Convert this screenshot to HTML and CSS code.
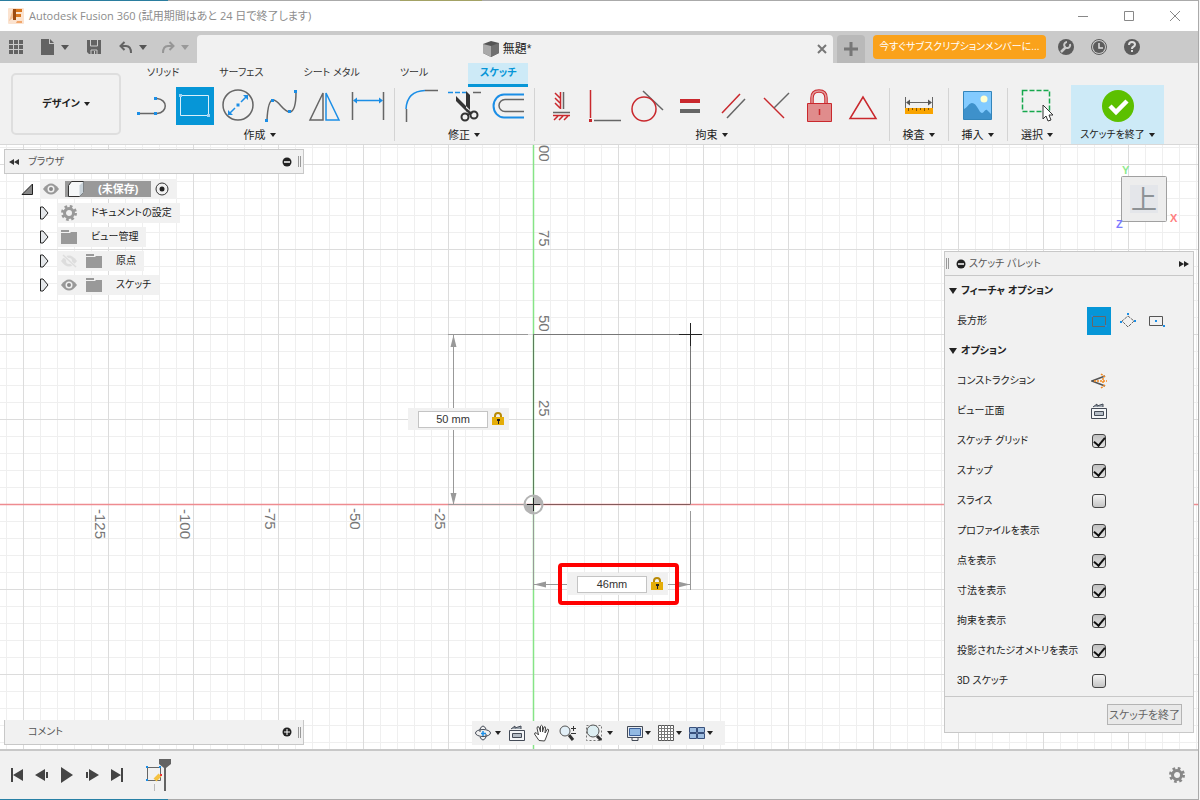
FILE: index.html
```
<!DOCTYPE html>
<html lang="ja">
<head>
    <meta charset="UTF-8">
    <meta name="viewport" content="width=device-width, initial-scale=1.0">
    <title>Autodesk Fusion 360</title>
    <link rel="stylesheet" href="styles.css">
</head>
<body>
    <div class="app">
        <div class="edge edge-top"></div>

        <header class="titlebar">
            <svg class="logo" width="16" height="16" viewBox="0 0 16 16">
                <rect width="16" height="16" rx="1" fill="#fbe3d0"/>
                <path d="M1 13 5 1v9z" fill="#f5bd92"/>
                <path d="M5 1h9v3H8v2h5v3H8v3H5z" fill="#d9751d"/>
                <path d="M5 1h3v11H5z" fill="#9b4a12"/>
                <path d="M9 13h5v2H8z" fill="#f1a66b"/>
            </svg>
            <h1>Autodesk Fusion 360 (試用期間はあと 24 日で終了します)</h1>
            <div class="window-buttons">
                <button aria-label="最小化"><svg width="12" height="12"><path d="M1 6.500h10" stroke="#888"/></svg></button>
                <button aria-label="最大化"><svg width="12" height="12"><path d="M1.500 1.500h9v9h-9z" fill="none" stroke="#888"/></svg></button>
                <button aria-label="閉じる"><svg width="12" height="12"><path d="M1 1l10 10M11 1 1 11" stroke="#888"/></svg></button>
            </div>
        </header>

        <div class="quickbar">
            <div class="quick-tools">
                <button aria-label="データ パネル"><svg width="14" height="14" fill="#636363"><path d="M0 0h4v4H0zM5 0h4v4H5zM10 0h4v4h-4zM0 5h4v4H0zM5 5h4v4H5zM10 5h4v4h-4zM0 10h4v4H0zM5 10h4v4H5zM10 10h4v4h-4z"/></svg></button>
                <button class="quick-file" aria-label="ファイル"><svg width="14" height="16" fill="#636363"><path d="M0 0h8v5h5v11H0zM9 0l4 4H9z"/></svg><span class="caret"></span></button>
                <button class="quick-save" aria-label="保存"><svg width="14" height="14"><path d="M0 0h14v14H2l-2-2z" fill="#636363"/><path d="M3.500 0v6h7V0M4 14v-4h6v4" fill="none" stroke="#ccc"/><path d="M7 11h1v3H7z" fill="#ccc"/></svg></button>
                <button class="quick-undo" aria-label="元に戻す"><svg width="14" height="13"><path d="M1 5h6q5 0 5 7M5.500 1 1.500 5l4 4" fill="none" stroke="#636363" stroke-width="2"/></svg><span class="caret"></span></button>
                <button class="quick-redo" aria-label="やり直し"><svg width="14" height="13"><path d="M13 5H7q-5 0-5 7M8.500 1l4 4-4 4" fill="none" stroke="#969696" stroke-width="2"/></svg><span class="caret"></span></button>
            </div>
            <div class="doc-tab">
                <span class="doc-name">
                    <svg width="16" height="16"><path d="M0 3 8 0l8 2v10l-8 4-8-4z" fill="#555"/><path d="M0 3l8 2v11l-8-4z" fill="#aaa"/><path d="M8 5l8-3v10l-8 4z" fill="#707070"/></svg>
                    無題*
                </span>
                <button aria-label="タブを閉じる"><svg width="10" height="10"><path d="M1 1l8 8M9 1 1 9" stroke="#777" stroke-width="2"/></svg></button>
            </div>
            <button class="add-tab" aria-label="新規"><svg width="14" height="14"><path d="M7 0v14M0 7h14" stroke="#777" stroke-width="3"/></svg></button>
            <button class="subscribe">今すぐサブスクリプションメンバーに...</button>
            <div class="help-buttons">
                <button aria-label="拡張機能"><svg width="16" height="16"><circle cx="8" cy="8" r="8" fill="#5c5c5c"/><path d="M3 13l5-5" stroke="#ccc" stroke-width="2.500"/><path d="M12 5a3 3 0 1 1-3-2" fill="none" stroke="#ccc" stroke-width="2"/></svg></button>
                <button aria-label="ジョブ状態"><svg width="16" height="16"><circle cx="8" cy="8" r="7.500" fill="none" stroke="#5c5c5c"/><circle cx="8" cy="8" r="6" fill="#5c5c5c"/><path d="M8 4v5h4" fill="none" stroke="#ddd" stroke-width="1.500"/></svg></button>
                <button aria-label="ヘルプ"><svg width="16" height="16"><circle cx="8" cy="8" r="8" fill="#5c5c5c"/><path d="M5 6q0-3 3-3t3 2.500q0 1.500-2 2.500-1 .5-1 2" fill="none" stroke="#ddd" stroke-width="2"/><path d="M7 11h2v2H7z" fill="#ddd"/></svg></button>
            </div>
        </div>

        <div class="ribbon">
            <button class="workspace">デザイン <span class="caret"></span></button>
            <div class="ribbon-main">
                <nav class="ribbon-tabs">
                    <a href="#">ソリッド</a>
                    <a href="#">サーフェス</a>
                    <a href="#">シート メタル</a>
                    <a href="#">ツール</a>
                    <a href="#" class="active">スケッチ</a>
                </nav>
                <div class="groups">
                    <section class="group">
                        <div class="tools">
                            <button aria-label="線分"><svg width="38" height="38"><g fill="none" stroke="#666" stroke-width="1.500"><path d="M7 26.500h14M24 11.500c11 1 11 14 0 15"/></g><path d="M4 25h3v3H4zM24 25h-3v3h3zM21 10h3v3h-3z" fill="#1b8ee6"/></svg></button>
                            <button class="selected" aria-label="長方形"><svg width="38" height="38"><path d="M4.500 8.500h28v20h-28z" fill="none" stroke="#d9effa"/><path d="M3 7h3v3H3zM31 27h3v3h-3z" fill="#9fd4f5"/></svg></button>
                            <button aria-label="円"><svg width="38" height="38"><circle cx="19" cy="18" r="15" fill="none" stroke="#666" stroke-width="1.500"/><path d="M11 26l5-5M22 15l5-5" stroke="#1b8ee6" stroke-width="1.500"/><path d="M9 28v-5l5 5zM29 8v5l-5-5zM17.500 16.500h3v3h-3z" fill="#1b8ee6"/></svg></button>
                            <button aria-label="スプライン"><svg width="38" height="38"><path d="M5 33q1-20 6-20c6 0 10 12 17 12q6-1 6-20" fill="none" stroke="#666" stroke-width="1.500"/><path d="M3 32h3v3H3zM9 12h3v3H9zM26 23h3v3h-3zM32 3h3v3h-3z" fill="#1b8ee6"/></svg></button>
                            <button aria-label="ミラー"><svg width="38" height="38" fill="none" stroke-width="1.500"><path d="M18 6v27H5z" stroke="#666"/><path d="M21 6v27h13z" stroke="#1b8ee6"/></svg></button>
                            <button aria-label="寸法"><svg width="38" height="38"><path d="M4.500 5v28M35.500 5v28" stroke="#666" stroke-width="1.500"/><path d="M7 13.500h26" stroke="#1b8ee6" stroke-width="1.500"/><path d="M5 13.500l4-3v6zM35 13.500l-4-3v6z" fill="#1b8ee6"/></svg></button>
                        </div>
                        <button class="group-label">作成<span class="caret"></span></button>
                    </section>
                    <section class="group">
                        <div class="tools">
                            <button aria-label="フィレット"><svg width="38" height="38" fill="none" stroke-width="1.500"><path d="M4 22Q5 4 23 3.500" stroke="#1b8ee6"/><path d="M23 3.500h13M4.500 22v13" stroke="#666"/></svg></button>
                            <button aria-label="トリム"><svg width="38" height="38"><path d="M3 5.500h18" stroke="#1b8ee6" stroke-width="1.500" stroke-dasharray="5 2"/><path d="M28 5.500h8" stroke="#666" stroke-width="1.500"/><path d="M11 9v5l11 11 3-2zM21 4l4 4v16l-4-3z" fill="#333"/><g fill="none" stroke="#333" stroke-width="2"><circle cx="20" cy="30" r="3.500"/><circle cx="29" cy="28" r="3.500"/><path d="M22 24l4 2-4 2"/></g></svg></button>
                            <button aria-label="オフセット"><svg width="38" height="38" fill="none" stroke-width="1.500"><path d="M36 7.500H16a10 11 0 0 0 0 23h20" stroke="#1b8ee6" stroke-width="2"/><path d="M36 12.500H17a6 6 0 0 0 0 12h19" stroke="#666"/></svg></button>
                        </div>
                        <button class="group-label">修正<span class="caret"></span></button>
                    </section>
                    <section class="group">
                        <div class="tools">
                            <button aria-label="水平/垂直"><svg width="38" height="38" fill="none" stroke="#c9282d" stroke-width="1.500"><path d="M18.500 5v17M13 6l5 5M13 11l5 5M13 16l5 5M11 28.500h17M16 29l-4 4M21 29l-4 4M26 29l-4 4"/><path d="M21.500 5v17M11 25.500h17" stroke="#666"/></svg></button>
                            <button aria-label="一致"><svg width="38" height="38"><path d="M5.500 3v28" stroke="#c9282d" stroke-width="1.500"/><path d="M4 32h3v3H4z" fill="#c9282d"/><path d="M9 33.500h27" stroke="#666" stroke-width="1.500"/></svg></button>
                            <button aria-label="接線"><svg width="38" height="38" fill="none" stroke-width="1.500"><path d="M15 4l20 19" stroke="#666"/><circle cx="16" cy="22" r="12" stroke="#c9282d"/></svg></button>
                            <button aria-label="等しい"><svg width="38" height="38"><path d="M9 12h20v4H9z" fill="#c9282d"/><path d="M9 22h20v4H9z" fill="#666"/></svg></button>
                            <button aria-label="平行"><svg width="38" height="38" stroke-width="1.500"><path d="M8 26 26 7" stroke="#c9282d"/><path d="M13 31l18-19" stroke="#666"/></svg></button>
                            <button aria-label="直交"><svg width="38" height="38" stroke-width="1.500"><path d="M7 11l20 20" stroke="#c9282d"/><path d="M17 21 32 6" stroke="#666"/></svg></button>
                            <button aria-label="固定"><svg width="38" height="38"><path d="M12 17v-6q0-7 7-7t7 7v6" fill="none" stroke="#c9282d" stroke-width="3.500"/><path d="M12 17v-6q0-7 7-7t7 7v6" fill="none" stroke="#e39b9b" stroke-width="1.500"/><path d="M7.500 16.500h24v18h-24z" fill="#e08c8c" stroke="#c9282d"/><path d="M19.500 22v6" stroke="#c9282d" stroke-width="1.500"/></svg></button>
                            <button aria-label="中点"><svg width="38" height="38"><path d="M20 10 7 31.500h26z" fill="none" stroke="#c9282d" stroke-width="1.500"/></svg></button>
                        </div>
                        <button class="group-label">拘束<span class="caret"></span></button>
                    </section>
                    <section class="group single">
                        <div class="tools">
                            <button aria-label="計測"><svg width="38" height="38"><path d="M5.500 10v11M32.500 10v11M7 15.500h24" stroke="#666"/><path d="M6 15.500l4-3v6zM32 15.500l-4-3v6z" fill="#555"/><path d="M5 21h28v6H5z" fill="#f9a400"/><path d="M8.500 21v3M12.500 21v2M16.500 21v3M20.500 21v2M24.500 21v3M28.500 21v2" stroke="#855500"/></svg></button>
                        </div>
                        <button class="group-label">検査<span class="caret"></span></button>
                    </section>
                    <section class="group single">
                        <div class="tools">
                            <button aria-label="画像"><svg width="38" height="38"><path d="M4.500 4.500h28v28h-28z" fill="#83cbff" stroke="#3385bb"/><path d="M5 22c4-2 5-6 8-6 5 0 7 10 10 10 2 0 3-4 5-3l4 4v5H5z" fill="#3e91cb"/><circle cx="25" cy="12" r="3.500" fill="#ffffd0"/></svg></button>
                        </div>
                        <button class="group-label">挿入<span class="caret"></span></button>
                    </section>
                    <section class="group single last">
                        <div class="tools">
                            <button aria-label="選択"><svg width="38" height="38"><path d="M4.500 3.500h27v21h-27z" fill="none" stroke="#16a84d" stroke-width="1.500" stroke-dasharray="5 2"/><path d="M25 18v14l3-3 2 5 3-1-2-5h4z" fill="#fff" stroke="#333"/></svg></button>
                        </div>
                        <button class="group-label">選択<span class="caret"></span></button>
                    </section>
                    <section class="group finish">
                        <div class="tools">
                            <button aria-label="スケッチを終了"><svg width="38" height="38"><circle cx="19" cy="19" r="16" fill="#5cc000"/><path d="M11 19l6 6 11-11" fill="none" stroke="#fff" stroke-width="4.500"/></svg></button>
                        </div>
                        <button class="group-label">スケッチを終了<span class="caret"></span></button>
                    </section>
                </div>
            </div>
        </div>

        <main class="canvas">
            <svg class="sketch" width="100%" height="100%">
                <path d="M533.500 0v604" stroke="#86e486" stroke-width="1.500"/>
                <line x1="0" y1="359.500" x2="100%" y2="359.500" stroke="#ee8b90" stroke-width="1.500"/>
                <g fill="none" stroke="#999">
                    <path d="M448 189.500h80M448 359.500h86M533.500 360v85M690.500 366v79"/>
                    <path d="M453.500 190v170M534 439.500h157"/>
                </g>
                <path d="M533.500 190v169" stroke="#5b7c5b"/>
                <path d="M533 359.500h157" stroke="#835a5a"/>
                <path d="M533 189.500h157.500v170" fill="none" stroke="#777"/>
                <path d="M679 189.500h23M690.500 178v23" stroke="#222"/>
                <path d="M453.500 190l-3 12h6zM453.500 360l-3-12h6zM534 439.500l12-3v6zM690 439.500l-12-3v6z" fill="#999"/>
                <g>
                    <circle cx="533.500" cy="359.500" r="9" fill="none" stroke="#b4b4b4" stroke-width="2"/>
                    <path d="M533.500 359.500v-9a9 9 0 0 1 9 9zM533.500 359.500v9a9 9 0 0 1-9-9z" fill="#b4b4b4"/>
                    <path d="M527 359.500h13M533.500 353v13" stroke="#222"/>
                </g>
                <g class="ruler">
                    <text transform="translate(539 0) rotate(90)">00</text>
                    <text transform="translate(539 85) rotate(90)">75</text>
                    <text transform="translate(539 170) rotate(90)">50</text>
                    <text transform="translate(539 255) rotate(90)">25</text>
                    <text transform="translate(95 364) rotate(90)">-125</text>
                    <text transform="translate(180 364) rotate(90)">-100</text>
                    <text transform="translate(265 363) rotate(90)">-75</text>
                    <text transform="translate(350 363) rotate(90)">-50</text>
                    <text transform="translate(435 363) rotate(90)">-25</text>
                </g>
            </svg>

            <div class="dimension height-dim">
                <input type="text" value="50 mm" aria-label="高さ">
                <svg width="12" height="14"><path d="M3 6V4q0-3 3-3t3 3v2" fill="none" stroke="#b98a05" stroke-width="2"/><path d="M0 5h12v8H0z" fill="#e4ad08"/><path d="M5 7h3v2H7v3H6V9H5z" fill="#222"/></svg>
            </div>
            <div class="dimension width-dim">
                <input type="text" value="46mm" aria-label="幅">
                <svg width="12" height="14"><path d="M3 6V4q0-3 3-3t3 3v2" fill="none" stroke="#b98a05" stroke-width="2"/><path d="M0 5h12v8H0z" fill="#e4ad08"/><path d="M5 7h3v2H7v3H6V9H5z" fill="#222"/></svg>
            </div>
            <div class="callout"></div>

            <aside class="browser">
                <div class="panel-bar">
                    <svg width="10" height="8"><path d="M5 1v6L0 4zM10 1v6L5 4z" fill="#333"/></svg>
                    <span class="panel-title">ブラウザ</span>
                    <button aria-label="折りたたむ"><svg width="10" height="10"><circle cx="5" cy="5" r="4.500" fill="#222"/><path d="M2 5h6" stroke="#fff" stroke-width="1.500"/></svg></button>
                    <span class="grip"></span>
                </div>
                <ul class="tree">
                    <li class="root">
                        <svg class="toggle" width="12" height="12"><path d="M11.500 1v10.500H1z" fill="#888" stroke="#222"/></svg>
                        <div class="node">
                            <svg width="16" height="12"><path d="M0 6q8-11 16 0-8 11-16 0z" fill="#999"/><circle cx="8" cy="6" r="3.500" fill="#f0f0f0"/><circle cx="8" cy="6" r="2" fill="#888"/></svg>
                            <span class="root-name"><svg width="16" height="16"><path d="M.5 4.500l3-4h12v11l-4 4H.5z" fill="#f5f7f8" stroke="#333"/><path d="M11.500 4.500l4-4v11l-4 4z" fill="#c9d3da"/></svg>(未保存)</span>
                            <svg width="14" height="14"><circle cx="7" cy="7" r="6" fill="none" stroke="#333"/><circle cx="7" cy="7" r="2.500" fill="#222"/></svg>
                        </div>
                    </li>
                    <li>
                        <svg class="toggle" width="12" height="14"><path d="M1.500 1v12H4l5-6-5-6z" fill="#e4e7ea" stroke="#222"/></svg>
                        <div class="node">
                            <svg width="16" height="16"><circle cx="8" cy="8" r="6.500" fill="none" stroke="#999" stroke-width="3" stroke-dasharray="2.600 2.500"/><circle cx="8" cy="8" r="4.500" fill="none" stroke="#999" stroke-width="3"/></svg>
                            <span>ドキュメントの設定</span>
                        </div>
                    </li>
                    <li>
                        <svg class="toggle" width="12" height="14"><path d="M1.500 1v12H4l5-6-5-6z" fill="#e4e7ea" stroke="#222"/></svg>
                        <div class="node">
                            <svg width="16" height="14"><path d="M0 0h8v2H0zM0 3h9l1-1h6v12H0z" fill="#999"/></svg>
                            <span>ビュー管理</span>
                        </div>
                    </li>
                    <li>
                        <svg class="toggle" width="12" height="14"><path d="M1.500 1v12H4l5-6-5-6z" fill="#e4e7ea" stroke="#222"/></svg>
                        <div class="node">
                            <svg width="16" height="14"><path d="M0 7q8-11 16 0-8 11-16 0z" fill="#ddd"/><circle cx="8" cy="7" r="3" fill="#f0f0f0"/><path d="M2 1l13 12" stroke="#f0f0f0" stroke-width="3"/><path d="M2 1l13 12" stroke="#ddd" stroke-width="1.500"/></svg>
                            <svg width="16" height="14"><path d="M0 0h8v2H0zM0 3h9l1-1h6v12H0z" fill="#999"/></svg>
                            <span>原点</span>
                        </div>
                    </li>
                    <li>
                        <svg class="toggle" width="12" height="14"><path d="M1.500 1v12H4l5-6-5-6z" fill="#e4e7ea" stroke="#222"/></svg>
                        <div class="node">
                            <svg width="16" height="12"><path d="M0 6q8-11 16 0-8 11-16 0z" fill="#999"/><circle cx="8" cy="6" r="3.500" fill="#f0f0f0"/><circle cx="8" cy="6" r="2" fill="#888"/></svg>
                            <svg width="16" height="14"><path d="M0 0h8v2H0zM0 3h9l1-1h6v12H0z" fill="#999"/></svg>
                            <span>スケッチ</span>
                        </div>
                    </li>
                </ul>
            </aside>

            <svg class="viewcube" width="64" height="70">
                <rect x="7.500" y="13.500" width="45" height="45" rx="1" fill="#ededed" stroke="#a0a0a0"/>
                <path d="M16 22h28v28H16z" fill="#e4e6ea"/>
                <text class="face" x="30" y="46">上</text>
                <text class="axis-y" x="8" y="11">Y</text>
                <text class="axis-x" x="56" y="59">X</text>
                <text class="axis-z" x="2" y="65">Z</text>
            </svg>

            <aside class="palette">
                <div class="palette-head">
                    <span class="grip"></span>
                    <svg width="10" height="10"><circle cx="5" cy="5" r="4.500" fill="#222"/><path d="M2 5h6" stroke="#fff" stroke-width="1.500"/></svg>
                    <span class="panel-title">スケッチ パレット</span>
                    <svg width="10" height="8"><path d="M0 1v6l5-3zM5 1v6l5-3z" fill="#222"/></svg>
                </div>
                <div class="palette-body">
                    <h2>フィーチャ オプション</h2>
                    <div class="option shapes">
                        <span>長方形</span>
                        <button class="on" aria-label="2 点指定の長方形"><svg width="16" height="16"><path d="M1.500 3.500h13v10h-13z" fill="none" stroke="#666"/><path d="M0 2h2v2H0zM14 12h2v2h-2z" fill="#1b8ee6"/></svg></button>
                        <button aria-label="3 点指定の長方形"><svg width="16" height="16"><path d="M8 3l6 5-6 6-6-6z" fill="none" stroke="#666" stroke-dasharray="3 1"/><path d="M7 0h2v2H7zM0 8h2v2H0zM14 7h2v2h-2z" fill="#1b8ee6"/></svg></button>
                        <button aria-label="中心の長方形"><svg width="16" height="16"><path d="M.500 3.500h13v9H.500z" fill="none" stroke="#555"/><path d="M6 7h2v2H6zM14 12h2v2h-2z" fill="#1b8ee6"/></svg></button>
                    </div>
                    <h2>オプション</h2>
                    <div class="option">
                        <span>コンストラクション</span>
                        <button aria-label="コンストラクション"><svg width="16" height="16"><path d="M14 3 1 8l13 5" fill="none" stroke="#555" stroke-width="1.500"/><path d="M3 8h13M10 1l4 3M10 15l4-3M12 5v6" fill="none" stroke="#f58b1f" stroke-width="1.500" stroke-dasharray="2 1"/></svg></button>
                    </div>
                    <div class="option">
                        <span>ビュー正面</span>
                        <button aria-label="ビュー正面"><svg width="16" height="16"><path d="M.500 5.500h15v10H.500z" fill="#f4f6f8" stroke="#444b57"/><path d="M3.500 8.500h9v4h-9z" fill="#b5bdc6" stroke="#444b57"/><path d="M2 4l4-3v2l6-2v3" fill="#9aa3ad" stroke="#444b57"/></svg></button>
                    </div>
                    <label class="option"><span>スケッチ グリッド</span><input type="checkbox" checked></label>
                    <label class="option"><span>スナップ</span><input type="checkbox" checked></label>
                    <label class="option"><span>スライス</span><input type="checkbox"></label>
                    <label class="option"><span>プロファイルを表示</span><input type="checkbox" checked></label>
                    <label class="option"><span>点を表示</span><input type="checkbox" checked></label>
                    <label class="option"><span>寸法を表示</span><input type="checkbox" checked></label>
                    <label class="option"><span>拘束を表示</span><input type="checkbox" checked></label>
                    <label class="option"><span>投影されたジオメトリを表示</span><input type="checkbox" checked></label>
                    <label class="option"><span>3D スケッチ</span><input type="checkbox"></label>
                </div>
                <div class="palette-foot"><button>スケッチを終了</button></div>
            </aside>

            <div class="panel-bar comments">
                <span class="panel-title">コメント</span>
                <button aria-label="コメントを追加"><svg width="10" height="10"><circle cx="5" cy="5" r="4.500" fill="#222"/><path d="M2 5h6M5 2v6" stroke="#fff"/></svg></button>
                <span class="grip"></span>
            </div>

            <div class="navbar">
                <button aria-label="オービット"><svg width="16" height="16" fill="none" stroke="#444b57"><ellipse cx="8" cy="8" rx="7.500" ry="3.500"/><path d="M5 4q3-6 6 0M5 12q3 6 6 0M5 4v3M11 9v3"/><path d="M8 6v5M6 8.500h5" stroke="#1b8ee6" stroke-width="1.500"/></svg><span class="caret"></span></button>
                <button aria-label="ビュー正面"><svg width="16" height="16"><path d="M.500 5.500h15v10H.500z" fill="#f4f6f8" stroke="#444b57"/><path d="M3.500 8.500h9v4h-9z" fill="#b5bdc6" stroke="#444b57"/><path d="M2 4l4-3v2l6-2v3" fill="#9aa3ad" stroke="#444b57"/></svg></button>
                <button aria-label="画面移動"><svg width="18" height="18"><path d="M6 16.500 1.500 10q0-2 2-1l2 2L4 4q0-2 2-1l1.500 5L7.500 2q1-1.500 2 0v6l1.500-5q1.500-1 1.500 1L12 9l2.500-4q1.500 0 1 2l-3 8-1 2z" fill="#fff" stroke="#444"/></svg></button>
                <button aria-label="ズーム"><svg width="18" height="16"><circle cx="6" cy="6" r="5" fill="#e3f0f8" stroke="#555"/><path d="M10 10l4 5" stroke="#333" stroke-width="3"/><path d="M12 3.500h5M14.500 1v5M12 8.500h5" stroke="#333"/></svg></button>
                <button aria-label="フィット"><svg width="18" height="18"><path d="M1.500 1.500h15v15h-15z" fill="none" stroke="#777" stroke-dasharray="2 2"/><circle cx="8" cy="7" r="6" fill="#ddeef2" stroke="#555"/><path d="M12 12l4 4" stroke="#333" stroke-width="3"/></svg><span class="caret"></span></button>
                <button class="nav-display" aria-label="表示設定"><svg width="16" height="16"><path d="M.500 1.500h15v11H.500z" fill="#e7ecf1" stroke="#444b57"/><path d="M2.500 3.500h11v7h-11z" fill="#92b9e2" stroke="#3a5f9a"/><path d="M5 13v2.500h6V13" fill="none" stroke="#444b57"/></svg><span class="caret"></span></button>
                <button aria-label="グリッドとスナップ"><svg width="16" height="16"><path d="M.500.500h15v15H.500z" fill="#fff" stroke="#555"/><path d="M3.500 0v16M6.500 0v16M9.500 0v16M12.500 0v16M0 3.500h16M0 6.500h16M0 9.500h16M0 12.500h16" stroke="#777"/></svg><span class="caret"></span></button>
                <button aria-label="ビューポート"><svg width="16" height="14" fill="#9ebde0" stroke="#38507c"><path d="M.500 1.500h7v5h-7zM8.500 1.500h7v5h-7zM.500 7.500h7v5h-7zM8.500 7.500h7v5h-7z"/></svg><span class="caret"></span></button>
            </div>
        </main>

        <footer class="timeline">
            <div class="playback">
                <button aria-label="先頭へ"><svg width="14" height="16" fill="#444"><path d="M1 1h2v14H1zM13 2v12L3 8z"/></svg></button>
                <button aria-label="戻る"><svg width="14" height="16" fill="#444"><path d="M10 2v12L0 8zM11 5h2v6h-2z"/></svg></button>
                <button aria-label="再生"><svg width="14" height="16" fill="#444"><path d="M1 0l12 8-12 8z"/></svg></button>
                <button aria-label="進む"><svg width="14" height="16" fill="#444"><path d="M4 2v12l10-6zM1 5h2v6H1z"/></svg></button>
                <button aria-label="末尾へ"><svg width="14" height="16" fill="#444"><path d="M11 1h2v14h-2zM1 2v12l10-6z"/></svg></button>
            </div>
            <svg class="feature" width="28" height="34">
                <path d="M2.500 9.500h13v13h-13z" fill="none" stroke="#666"/>
                <path d="M1 8h2v2H1zM14 8h2v2h-2zM1 21h2v2H1z" fill="#1b8ee6"/>
                <path d="M10 22l5-5" stroke="#f5c242" stroke-width="4"/>
                <path d="M15 16h2v2h-2z" fill="#e33"/>
                <path d="M9 26h1v7H9z" fill="#bbb"/>
                <path d="M14 1h12v5l-5 4v23h-2V10l-5-4z" fill="#636363"/>
            </svg>
            <button class="settings" aria-label="設定"><svg width="16" height="16"><circle cx="8" cy="8" r="6.500" fill="none" stroke="#888" stroke-width="3" stroke-dasharray="2.600 2.500"/><circle cx="8" cy="8" r="4.500" fill="none" stroke="#888" stroke-width="3"/></svg></button>
        </footer>
        <div class="edge"></div>
    </div>
</body>
</html>
```
FILE: styles.css
```
* {
    margin: 0;
    padding: 0;
    box-sizing: border-box;
}

body {
    font-family: 'Liberation Sans', 'Noto Sans CJK JP', sans-serif;
    font-size: 10px;
    font-feature-settings: 'palt';
    line-height: 16px;
    color: #222;
    background: #f4f4f4;
}

button {
    display: flex;
    align-items: center;
    justify-content: center;
    border: none;
    background: none;
    color: inherit;
    font: inherit;
    font-feature-settings: inherit;
    cursor: pointer;
    white-space: nowrap;
}

svg {
    display: block;
    flex: none;
}

.app {
    display: flex;
    flex-direction: column;
    height: 100vh;
    min-height: 700px;
    margin-right: 1px;
    border-right: 1px solid #aaa;
}

.caret {
    flex: none;
    width: 0;
    border: 3px solid transparent;
    border-top: 4px solid currentColor;
    border-bottom: none;
    margin-left: 4px;
}

.edge {
    height: 1px;
    background: linear-gradient(to right, #2881a6 168px, #aaa 168px);
}

.edge-top {
    background: linear-gradient(to right, #2a7d9f 168px, #aaa 168px, #aaa 400px, #a3a265 400px, #a3a265 482px, #aaa 482px);
}

/* title bar */
.titlebar {
    display: flex;
    align-items: center;
    height: 30px;
    padding-left: 8px;
    background: #fff;
}

.titlebar h1 {
    flex: 1;
    margin-left: 5px;
    font-family: 'Open Sans', 'Noto Sans CJK JP', sans-serif;
    font-size: 11px;
    font-weight: 400;
    color: #8c8c8c;
}

.window-buttons {
    display: flex;
}

.window-buttons button {
    width: 46px;
    height: 30px;
}

/* quick access and document tabs */
.quickbar {
    display: flex;
    align-items: flex-end;
    height: 32px;
    background: #cacaca;
}

.quick-tools {
    display: flex;
    align-items: center;
    width: 197px;
    height: 32px;
    padding-left: 9px;
    color: #555;
}

.quick-tools .caret {
    border-width: 4px;
    border-top-width: 5px;
    border-bottom: none;
    margin-left: 6px;
}

.quick-file,
.quick-save,
.quick-undo {
    margin-left: 18px;
}

.quick-redo {
    margin-left: 14px;
    color: #999;
}

.doc-tab {
    display: flex;
    flex: 1;
    align-items: center;
    height: 28px;
    padding-right: 6px;
    background: #f1f1f1;
    border-radius: 4px 4px 0 0;
}

.doc-name {
    display: flex;
    flex: 1;
    align-items: center;
    justify-content: center;
    gap: 4px;
    font-size: 12px;
}

.add-tab {
    width: 28px;
    height: 28px;
    margin-left: 4px;
    background: #b9b9b9;
    border-radius: 4px 4px 0 0;
}

.subscribe {
    width: 173px;
    height: 24px;
    margin: 0 0 4px 8px;
    border-radius: 4px;
    background: #faa21b;
    color: #fff;
}

.help-buttons {
    display: flex;
    gap: 17px;
    width: 152px;
    margin-bottom: 8px;
    padding-left: 12px;
}

/* ribbon */
.ribbon {
    display: flex;
    height: 82px;
    background: #f1f1f1;
    border-bottom: 1px solid #d8d8d8;
}

.workspace {
    width: 110px;
    height: 62px;
    margin: 10px 5px 0 11px;
    border: 2px solid #dedede;
    border-radius: 5px;
    font-weight: 700;
}

.ribbon-main {
    flex: 1;
}

.ribbon-tabs {
    display: flex;
    gap: 40px;
    height: 22px;
    padding-left: 21px;
}

.ribbon-tabs a {
    height: 24px;
    padding-top: 2px;
    border-bottom: 3px solid transparent;
    color: #333;
    text-align: center;
    text-decoration: none;
}

.ribbon-tabs .active {
    width: 60px;
    background: #cdeaf7;
    border-color: #0696d7;
    color: #0696d7;
    font-weight: 700;
}

.groups {
    display: flex;
    height: 59px;
}

.group {
    padding: 2px 8px 0 7px;
    border-right: 1px solid transparent;
    border-image: linear-gradient(#f1f1f1 4px, #d4d4d4 4px, #d4d4d4 55px, #f1f1f1 55px) 1;
}

.tools {
    display: flex;
    justify-content: center;
    gap: 5px;
    height: 38px;
}

.tools .selected {
    background: #0696d7;
}

.group-label {
    width: 100%;
    height: 19px;
    font-size: 11px;
}

.single {
    width: 59px;
}

.last {
    border: none;
}

.finish {
    width: 93px;
    margin-left: 4px;
    padding: 2px 0 0;
    border: none;
    background: #cdeaf7;
}

.finish .group-label {
    font-size: 10px;
}

/* drawing area */
.canvas {
    position: relative;
    flex: 1;
    min-height: 0;
    overflow: hidden;
    background-color: #fff;
    background-image:
        linear-gradient(to right, #dcdcdc 1px, transparent 1px),
        linear-gradient(to bottom, #dcdcdc 1px, transparent 1px),
        linear-gradient(to right, #efefef 1px, transparent 1px),
        linear-gradient(to bottom, #efefef 1px, transparent 1px);
    background-size: 85px 85px, 85px 85px, 17px 17px, 17px 17px;
    background-position: 23px 19px, 23px 19px, 6px 2px, 6px 2px;
}

.sketch {
    position: absolute;
    top: 0;
    left: 0;
}

.ruler {
    font-size: 15px;
    fill: #777;
}

.dimension {
    position: absolute;
    display: flex;
    align-items: center;
    gap: 4px;
    width: 101px;
    height: 22px;
    padding-left: 10px;
    background: #f1f1f1;
}

.dimension input {
    width: 70px;
    height: 17px;
    border: 1px solid #c4c4c4;
    background: #fff;
    color: #333;
    font: inherit;
    font-size: 11px;
    text-align: center;
}

.height-dim {
    top: 263px;
    left: 408px;
}

.width-dim {
    top: 428px;
    left: 567px;
}

.callout {
    position: absolute;
    top: 418px;
    left: 558px;
    width: 121px;
    height: 42px;
    border: 4px solid #f00;
    border-radius: 4px;
}

/* browser */
.browser {
    position: absolute;
    top: 4px;
    left: 4px;
    width: 300px;
}

.panel-bar {
    display: flex;
    align-items: center;
    height: 25px;
    padding: 0 2px 0 4px;
    background: #f1f1f1;
    border: 1px solid #c8c8c8;
}

.panel-title {
    flex: 1;
    margin-left: 9px;
    color: #555;
}

.grip {
    width: 3px;
    height: 11px;
    border: 1px solid #999;
    border-width: 0 1px;
}

.panel-bar .grip {
    margin-left: 6px;
}

.tree {
    padding-top: 5px;
    list-style: none;
}

.tree li {
    display: flex;
    align-items: center;
    height: 20px;
    margin-bottom: 4px;
    padding-left: 35px;
}

.tree .root {
    padding-left: 17px;
}

.node {
    display: flex;
    align-items: center;
    gap: 9px;
    height: 20px;
    margin-left: 7px;
    padding: 0 8px 0 3px;
    background: #f1f1f1;
}

.node span {
    margin-left: 5px;
}

.root .node {
    gap: 4px;
}

.node .root-name {
    display: flex;
    align-items: center;
    gap: 14px;
    width: 86px;
    height: 16px;
    margin-left: 2px;
    padding-left: 3px;
    background: #999;
    color: #fff;
    font-size: 11px;
    font-weight: 700;
}

/* view cube */
.viewcube {
    position: absolute;
    top: 18px;
    right: 20px;
    font-size: 11px;
    font-weight: 700;
}

.viewcube .face {
    font-size: 26px;
    font-weight: 400;
    fill: #8d9296;
    text-anchor: middle;
}

.axis-x {
    fill: #ff8080;
}

.axis-y {
    fill: #8eea8e;
}

.axis-z {
    fill: #7a7aff;
}

/* sketch palette */
.palette {
    position: absolute;
    top: 106px;
    right: 4px;
    width: 250px;
    background: #f1f1f1;
    border: 1px solid #c8c8c8;
}

.palette-head {
    display: flex;
    align-items: center;
    height: 24px;
    padding: 0 4px 0 1px;
    border-bottom: 1px solid #c8c8c8;
}

.palette-head .grip {
    margin-right: 7px;
}

.palette-head .panel-title {
    margin-left: 3px;
}

.palette-body h2 {
    height: 30px;
    padding-left: 4px;
    font-size: 10px;
    line-height: 30px;
}

.palette-body h2::before {
    content: '';
    display: inline-block;
    margin-right: 4px;
    border: 4px solid transparent;
    border-top: 6px solid #222;
    border-bottom: none;
}

.option {
    display: flex;
    align-items: center;
    height: 30px;
    padding-left: 12px;
}

.option span {
    width: 130px;
    white-space: nowrap;
}

.option button {
    width: 24px;
    height: 28px;
}

.shapes button {
    margin-right: 5px;
}

.option .on {
    background: #0696d7;
}

.option input {
    appearance: none;
    width: 14px;
    height: 14px;
    margin-left: 5px;
    border: 1px solid #444;
    border-radius: 3px;
    background: linear-gradient(#f4f4f4, #c4c4c4);
}

.option input:checked {
    background: linear-gradient(#c0c0c0, #e4e4e4);
}

.option input:checked::before {
    content: '';
    display: block;
    width: 5px;
    height: 9px;
    margin-left: 3px;
    border: solid #111;
    border-width: 0 2px 2px 0;
    transform: rotate(40deg);
}

.palette-foot {
    display: flex;
    justify-content: flex-end;
    padding: 7px 11px 7px 0;
    border-top: 1px solid #c8c8c8;
}

.palette-foot button {
    width: 75px;
    height: 21px;
    border: 1px solid #b4b4b4;
    background: #e9e9e9;
    color: #666;
    font-size: 11px;
}

/* bottom bars */
.comments {
    position: absolute;
    bottom: 4px;
    left: 4px;
    width: 300px;
    border-top: none;
}

.comments .panel-title {
    margin-left: 19px;
}

.navbar {
    position: absolute;
    bottom: 4px;
    left: 472px;
    display: flex;
    align-items: center;
    gap: 8px;
    width: 253px;
    height: 24px;
    padding-left: 3px;
    background: #f1f1f1;
}

.navbar .nav-display {
    margin-left: 6px;
}

.navbar .nav-display .caret,
.nav-display ~ button .caret {
    margin-left: 2px;
}

.nav-display ~ button {
    margin-left: -1px;
}

/* timeline */
.timeline {
    display: flex;
    align-items: center;
    height: 50px;
    padding: 0 13px 0 10px;
    background: #f1f1f1;
    border-top: 2px solid #c8c8c8;
}

.playback {
    display: flex;
    gap: 11px;
}

.feature {
    margin-left: 21px;
}

.settings {
    margin-left: auto;
}
```
